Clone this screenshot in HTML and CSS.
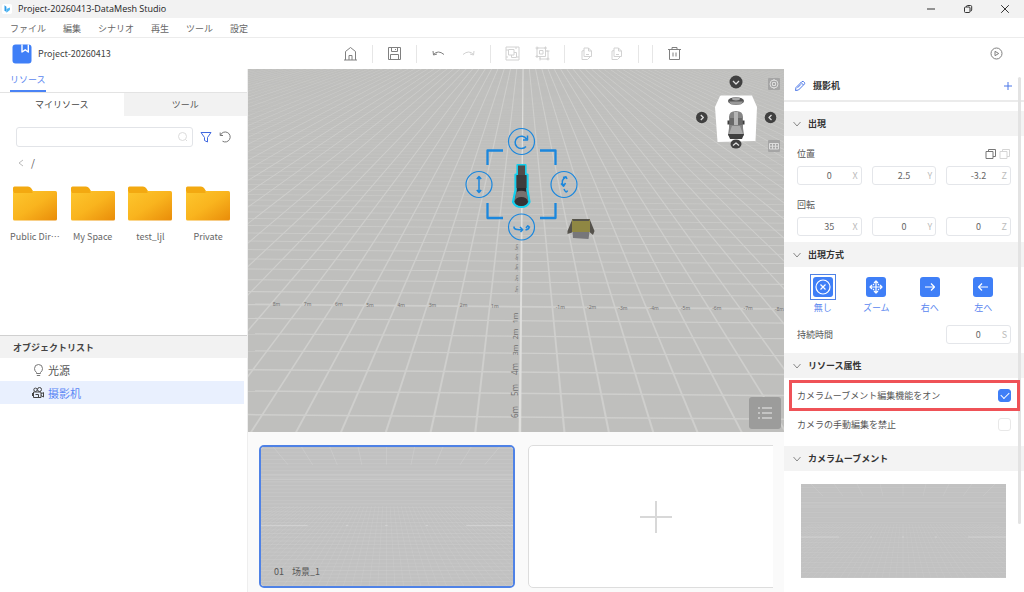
FILE: index.html
```html
<!DOCTYPE html>
<html lang="ja">
<head>
<meta charset="utf-8">
<title>Project-20260413-DataMesh Studio</title>
<link rel="stylesheet" href="styles.css">
</head>
<body>
<div class="app">
  <header class="titlebar">
    <svg class="app-logo" viewBox="0 0 12 12"><rect width="12" height="12" rx="2" fill="#fff"/><path d="M3 1.500L5.300 3.300V9.800L3 7.500Z" fill="#2f9be8"/><path d="M5.300 6L9.500 4.300V7.200L5.300 10.500Z" fill="#4db5f2"/></svg>
    <h1 class="window-title">Project-20260413-DataMesh Studio</h1>
    <div class="window-controls">
      <button class="win-btn" aria-label="最小化"><svg viewBox="0 0 10 10"><path d="M1 5H9"/></svg></button>
      <button class="win-btn" aria-label="元に戻す"><svg viewBox="0 0 10 10"><rect x="1.500" y="3" width="5.500" height="5.500" rx="1"/><path d="M3.500 3V2.500Q3.500 1.500 4.500 1.500H7.500Q8.700 1.500 8.700 2.700V6Q8.700 7 7.500 7"/></svg></button>
      <button class="win-btn" aria-label="閉じる"><svg viewBox="0 0 10 10"><path d="M1.200 1.200L8.800 8.800M8.800 1.200L1.200 8.800"/></svg></button>
    </div>
  </header>

  <nav class="menubar">
    <button>ファイル</button><button>編集</button><button>シナリオ</button><button>再生</button><button>ツール</button><button>設定</button>
  </nav>

  <div class="toolbar">
    <div class="project">
      <svg class="project-icon" viewBox="0 0 20 20"><rect x="0.500" y="0.500" width="19" height="19" rx="3" fill="#3f7ff7"/><path d="M10 0.500V8L13.200 5.800L16.300 8V0.500" fill="none" stroke="#fff" stroke-width="1.400"/></svg>
      <span>Project-20260413</span>
    </div>
    <div class="tools">
      <button class="tool" aria-label="ホーム"><svg viewBox="0 0 17 17"><path d="M2 15H15M3.500 15V6.500L8.500 2.500L13.500 6.500V15M7 15V10.500H10V15"/></svg></button>
      <i class="sep"></i>
      <button class="tool" aria-label="保存"><svg viewBox="0 0 17 17"><path d="M2.500 2.500H14.500V14.500H2.500ZM5.500 2.500V6.500H11.500V2.500M9.500 4V5M4.500 14.500V9.500H12.500V14.500"/></svg></button>
      <i class="sep"></i>
      <button class="tool" aria-label="元に戻す"><svg viewBox="0 0 17 17"><path d="M3 6L3.500 10L7 9M3.500 9.500Q8 4.500 14 9.500"/></svg></button>
      <button class="tool off" disabled aria-label="やり直し"><svg viewBox="0 0 17 17"><path d="M14 6L13.500 10L10 9M13.500 9.500Q9 4.500 3 9.500"/></svg></button>
      <i class="sep"></i>
      <button class="tool off" disabled aria-label="グループ化"><svg viewBox="0 0 17 17"><rect x="2" y="2" width="13" height="13"/><rect x="4.500" y="4.500" width="5.500" height="5.500"/><path d="M10 7.500H12.500V12.500H7.500V10"/><path d="M2 5H4M2 12H4M12 2V4M13 12H15"/></svg></button>
      <button class="tool off" disabled aria-label="グループ解除"><svg viewBox="0 0 17 17"><rect x="3" y="3" width="8.500" height="8.500"/><rect x="5.500" y="5.500" width="3.500" height="3.500"/><path d="M11.500 6H14V14H6V11.500M1.500 3H4.500M3 1.500V4.500M11.500 1.500V4.500M10 3H13M3 10V13M1.500 11.500H4.500M12.500 6H15.500M14 12.500V15.500M12.500 14H15.500M6 12.500V15.500"/></svg></button>
      <i class="sep"></i>
      <button class="tool off" disabled aria-label="コピー"><svg viewBox="0 0 17 17"><path d="M6 3H10.500L13.500 6V11.500H6ZM10.500 3V6H13.500M6 5.500L4 6V14.500H9.500L12 12M8 9.500H11"/></svg></button>
      <button class="tool off" disabled aria-label="貼り付け"><svg viewBox="0 0 17 17"><path d="M6 3H10.500L13.500 6V11.500H6ZM10.500 3V6H13.500M6 5.500L4 6V14.500H9.500L12 12M8 9.500H11"/></svg></button>
      <i class="sep"></i>
      <i class="sep"></i>
      <button class="tool" aria-label="削除"><svg viewBox="0 0 17 17"><path d="M2 4.500H15M6 4.500V2.500H11V4.500M3.500 4.500V14.500H13.500V4.500M7 7.500V11.500M10 7.500V11.500"/></svg></button>
    </div>
    <button class="tool play" aria-label="再生"><svg viewBox="0 0 17 17"><circle cx="8.500" cy="8.500" r="5.500"/><path d="M7 6.300V10.700L10.700 8.500Z"/></svg></button>
  </div>

  <main class="workspace">
    <aside class="left">
      <section class="resources">
        <div class="panel-tab"><button class="active">リソース</button></div>
        <div class="subtabs"><button class="active">マイリソース</button><button>ツール</button></div>
        <div class="search-row">
          <label class="search"><input type="text" aria-label="検索"><svg viewBox="0 0 12 12"><circle cx="5.500" cy="5.500" r="4"/><path d="M8.500 8.500L10 10"/></svg></label>
          <button class="mini blue" aria-label="フィルター"><svg viewBox="0 0 12 12"><path d="M1 1.500H11L7.500 6.500V11L4.500 9.500V6.500Z"/></svg></button>
          <button class="mini" aria-label="更新"><svg viewBox="0 0 12 12"><path d="M1.200 1.500V4.500H4M1.500 4.200A5 5 0 1 1 3.500 10.200"/></svg></button>
        </div>
        <div class="crumbs"><button aria-label="戻る"><svg viewBox="0 0 8 8"><path d="M6 1L2 4L6 7"/></svg></button><span>/</span></div>
        <svg class="defs" aria-hidden="true"><defs>
          <linearGradient id="gold" x1="0" y1="0" x2="1" y2="1"><stop offset="0" stop-color="#fdc62d"/><stop offset="0.500" stop-color="#f9b41e"/><stop offset="1" stop-color="#e98c09"/></linearGradient>
          <symbol id="folder" viewBox="0 0 44 35"><path d="M0 2Q0 0.500 1.500 0.500H15Q17 0.500 18 2L20 5V12H0Z" fill="#f3a911"/><rect x="0" y="5" width="44" height="29.500" rx="1.500" fill="url(#gold)"/><path d="M1 7V1.500H15L19.500 6V7Z" fill="#f3a911"/></symbol>
        </defs></svg>
        <div class="folders">
          <button><svg><use href="#folder"/></svg><span>Public Dir⋯</span></button>
          <button><svg><use href="#folder"/></svg><span>My Space</span></button>
          <button><svg><use href="#folder"/></svg><span>test_ljl</span></button>
          <button><svg><use href="#folder"/></svg><span>Private</span></button>
        </div>
      </section>
      <section class="objects">
        <h2>オブジェクトリスト</h2>
        <ul>
          <li><svg viewBox="0 0 12 14"><path d="M4.500 10.500V9.500Q2.500 8 2.500 5.500A4 4 0 0 1 10.500 5.500Q10.500 8 8.500 9.500V10.500ZM4.800 12.500H8.200"/></svg><span lang="zh-CN">光源</span></li>
          <li class="selected"><svg viewBox="0 0 12 14"><circle cx="3.500" cy="3.800" r="1.700"/><circle cx="7.500" cy="3.500" r="2"/><rect x="1.500" y="6" width="7.500" height="5.500"/><path d="M9 8L11.500 6.500V11L9 9.500M0.500 7V10M3.500 8.500H6.500V11.500"/></svg><span lang="zh-CN">摄影机</span></li>
        </ul>
      </section>
    </aside>

    <section class="center">
      <div class="viewport">
        <svg class="scene" viewBox="248 69 536 363" preserveAspectRatio="xMidYMid slice">
          <rect x="0" y="0" width="1024" height="592" fill="#bfbfbd"/>
          <g id="ground" transform="rotate(0.500 520 307)" fill="#cfcfcd" stroke="#cfcfcd"></g>
          <g id="axis-labels" class="axis-labels"></g>
          <g class="prop">
            <path d="M572 219H590V232H572Z" fill="#8f8743"/><path d="M572 219L590 219L589 221H573Z" fill="#55534b"/><path d="M572 220L567.500 231V234L572 232.500ZM590 220L594.500 231L593 235L590 232.500Z" fill="#55524c"/><path d="M572.500 232H589.500L588.500 239L573 238Z" fill="#77777a"/>
          </g>
          <g class="camera-model">
            <path d="M517.500 165H525.500V174.500H527.500V190L529.500 202Q527 207 521.300 207Q515.500 207 513 202L515.500 190V174.500H517.500Z" fill="#62605f" stroke="#12cfee" stroke-width="2.200" stroke-linejoin="round"/>
            <path d="M518 165.500H525V175H518Z" fill="#514c4b"/><path d="M516.500 175H526.500V188H516.500Z" fill="#3e3b3c"/><path d="M517 188H526V193H517Z" fill="#29292d"/><path d="M516.500 192Q521 189.500 526.500 192L528 201H515Z" fill="#77716f"/><ellipse cx="521.300" cy="201.500" rx="6.500" ry="4.500" fill="#343235"/>
          </g>
          <g class="gizmo">
            <path d="M487.500 165V150.500H503M540 150.500H555.500V165M487.500 203V218H503M540 218H555.500V203" stroke-width="2.300"/>
            <g stroke-width="1.200"><circle cx="521.500" cy="141.500" r="13"/><circle cx="479" cy="184.500" r="13"/><circle cx="564" cy="184.500" r="13"/><circle cx="521.500" cy="227" r="13"/></g>
            <g stroke-width="1.500"><path d="M526 146.500A6.200 6.200 0 1 1 526.500 139M527.500 135.500V140H523"/><path d="M479 177V192M476.800 179L479 176.500L481.200 179M476.800 190L479 192.500L481.200 190"/><path d="M566 177Q560 180 563.500 186M561 183.500L563.500 186.300L565.500 183M564 189Q566 194 567.500 190.500M563 177.500L566 176.800L567 179"/><path d="M514 226.500Q513.500 230.500 522.500 229.500M520 227L522.700 229.700L520.500 232M525.500 230Q531 228.500 528 226M526 228L527.800 225.800L530 227.500"/></g>
          </g>
        </svg>
        <svg class="viewcube" viewBox="0 0 82 76" role="img" aria-label="ビューキューブ">
          <path d="M24 27L25 26.500H56L61 38L59.500 72L21.500 73L19 38Z" transform="translate(0 0)" fill="#fff"/>
          <ellipse cx="40" cy="32" rx="8" ry="3.800" fill="#555"/><path d="M33 32.500H47L45 35.500H35Z" fill="#999"/><ellipse cx="40" cy="30" rx="4" ry="1.400" fill="#aaa"/>
          <path d="M33 48Q33 42 40 42Q47 42 47 48V59L48 66Q46 70 40 70Q34 70 32 66L33 59Z" fill="#858585"/><path d="M31.500 51.500H33.500V55.500H31.500ZM46.500 51.500H48.500V55.500H46.500Z" fill="#3d3d3d"/><path d="M34 49H46V56H34Z" fill="#696969"/><path d="M38 43H42V56H38Z" fill="#b5b5b5"/><path d="M36 57H44L47 65H33Z" fill="#aaa"/><path d="M32 65H48L46 70H34Z" fill="#3f3f3f"/>
          <g fill="#404040"><circle cx="40" cy="13" r="6.500"/><circle cx="5.800" cy="48.500" r="5.800"/><circle cx="74.500" cy="48.500" r="5.800"/></g>
          <path d="M37 12L40 15L43 12M4.800 46L7.300 48.500L4.800 51M75.500 46L73 48.500L75.500 51" fill="none" stroke="#ddd" stroke-width="1.300"/>
          <ellipse cx="40" cy="75" rx="5.500" ry="4.500" fill="#404040"/><path d="M37 76.500L40 74L43 76.500" fill="none" stroke="#ddd" stroke-width="1.300"/>
        </svg>
        <div class="view-tools">
          <button aria-label="フォーカス"><svg viewBox="0 0 12 12"><circle cx="6" cy="6" r="4"/><path d="M4.500 4.500H7.500V7.500H4.500ZM6 1V3M6 9V11"/></svg></button>
          <button aria-label="グリッド"><svg viewBox="0 0 12 12"><path d="M1.500 3.500H10.500V9H1.500ZM1.500 6.200H10.500M4.500 3.500V9M7.500 3.500V9"/></svg></button>
        </div>
        <button class="list-btn" aria-label="一覧"><svg viewBox="0 0 16 16"><path d="M5 3H15M5 8H15M5 13H15M1 3H3M1 8H3M1 13H3"/></svg></button>
      </div>
      <div class="strip">
        <div class="strip-scroll">
          <button class="scene-card active"><svg class="thumb" viewBox="0 0 205 94" preserveAspectRatio="none"></svg><span class="scene-name" lang="zh-CN"><span>01</span><span>场景_1</span></span></button>
          <button class="scene-card add" aria-label="シーンを追加"><svg viewBox="0 0 32 32"><path d="M16 0V32M0 16H32"/></svg></button>
        </div>
      </div>
    </section>

    <aside class="right">
      <div class="inspector-head">
        <svg viewBox="0 0 12 12"><path d="M1.500 10.500L2 7.500L8 1.500Q9.500 1 10.500 2.500Q11 3.500 10.300 4.200L4.500 10ZM7 2.500L9.500 5M3.500 7.800L7 4.300"/></svg>
        <h2 lang="zh-CN">摄影机</h2>
        <button aria-label="追加"><svg viewBox="0 0 12 12"><path d="M6 2V10M2 6H10"/></svg></button>
      </div>
      <h3 class="first"><svg viewBox="0 0 8 8"><path d="M0.500 2L4 6L7.500 2"/></svg>出現</h3>
      <div class="group">
        <div class="label-row"><span>位置</span><span class="copy-icons"><button aria-label="コピー"><svg viewBox="0 0 12 12"><path d="M1 3.500H8V10.500H1ZM3.500 3.500V1.500H10.500V8.500H8"/></svg></button><button class="off" disabled aria-label="貼り付け"><svg viewBox="0 0 12 12"><path d="M1 3.500H8V10.500H1ZM3.500 3.500V1.500H10.500V8.500H8"/></svg></button></span></div>
        <div class="fields">
          <label><input type="text" value="0"><span>X</span></label><label><input type="text" value="2.5"><span>Y</span></label><label><input type="text" value="-3.2"><span>Z</span></label>
        </div>
        <div class="label-row second"><span>回転</span></div>
        <div class="fields">
          <label><input type="text" value="35"><span>X</span></label><label><input type="text" value="0"><span>Y</span></label><label><input type="text" value="0"><span>Z</span></label>
        </div>
      </div>
      <h3><svg viewBox="0 0 8 8"><path d="M0.500 2L4 6L7.500 2"/></svg>出現方式</h3>
      <div class="modes">
        <button class="active"><span class="mode-icon"><svg viewBox="0 0 20 20"><circle cx="10" cy="10" r="7"/><path d="M7.500 7.500L12.500 12.500M12.500 7.500L7.500 12.500"/></svg></span>無し</button>
        <button><span class="mode-icon"><svg viewBox="0 0 20 20"><path d="M10 4V16M4 10H16M8 6L10 4L12 6M8 14L10 16L12 14M6 8L4 10L6 12M14 8L16 10L14 12M7 7L8 8M13 7L12 8M7 13L8 12M13 13L12 12"/></svg></span>ズーム</button>
        <button><span class="mode-icon"><svg viewBox="0 0 20 20"><path d="M5 10H14.500M11 6.500L14.500 10L11 13.500"/></svg></span>右へ</button>
        <button><span class="mode-icon"><svg viewBox="0 0 20 20"><path d="M15 10H5.500M9 6.500L5.500 10L9 13.500"/></svg></span>左へ</button>
      </div>
      <div class="duration"><span id="duration-label">持続時間</span><div class="fields"><label><input type="text" value="0" aria-labelledby="duration-label"><span>S</span></label></div></div>
      <h3><svg viewBox="0 0 8 8"><path d="M0.500 2L4 6L7.500 2"/></svg>リソース属性</h3>
      <label class="check-row highlight"><span>カメラムーブメント編集機能をオン</span><input type="checkbox" checked></label>
      <label class="check-row"><span>カメラの手動編集を禁止</span><input type="checkbox"></label>
      <h3><svg viewBox="0 0 8 8"><path d="M0.500 2L4 6L7.500 2"/></svg>カメラムーブメント</h3>
      <svg class="thumb preview" viewBox="0 0 205 94" preserveAspectRatio="none"></svg>
      <div class="scrollbar"></div>
    </aside>
  </main>
</div>
<script src="scene.js"></script>
</body>
</html>
```
FILE: styles.css
```css
* { box-sizing: border-box; }
body, h1, h2, h3, ul { margin: 0; padding: 0; }
body {
  font-family: "Noto Sans CJK JP", "Noto Sans CJK SC", sans-serif;
  font-size: 9px;
  line-height: 14px;
  color: #555;
  background: #fff;
}
[lang="zh-CN"] { font-family: "Noto Sans CJK SC", sans-serif; }
button { font: inherit; color: inherit; background: none; border: 0; padding: 0; margin: 0; }
input { font: inherit; color: inherit; margin: 0; }
svg { display: block; fill: none; stroke-linejoin: round; }
.defs { position: absolute; width: 0; height: 0; }
.app { height: 100vh; display: flex; flex-direction: column; overflow: hidden; }

.titlebar { height: 18px; flex: none; display: flex; align-items: center; gap: 6px; padding: 0 14px 0 2px; background: #f2f2f2; }
.app-logo { width: 10px; height: 12px; }
.window-title { font: 400 9px/14px "Open Sans", "Noto Sans", sans-serif; color: #222; }
.window-controls { margin-left: auto; display: flex; gap: 27px; }
.win-btn { width: 10px; height: 10px; stroke: #333; }

.menubar { height: 20px; flex: none; display: flex; align-items: center; gap: 17px; padding: 2px 10px 0; border-bottom: 1px solid #ececec; color: #666; }

.toolbar { height: 31px; flex: none; display: flex; align-items: center; padding-right: 19px; }
.project { width: 342px; flex: none; display: flex; align-items: center; gap: 6px; padding-left: 12px; color: #444; }
.project-icon { width: 20px; height: 20px; }
.tools { display: flex; align-items: center; gap: 13px; }
.tool { width: 17px; height: 17px; stroke: #808080; }
.tool.off { stroke: #d2d2d2; }
.sep { width: 1px; height: 18px; background: #e6e6e6; }
.play { margin-left: auto; }

.workspace { flex: 1; min-height: 0; display: grid; grid-template-columns: 248px 1fr 240px; }
.left { display: flex; flex-direction: column; min-height: 0; border-right: 1px solid #eee; }
.resources { flex: none; height: 266px; }
.panel-tab { height: 24px; padding-left: 10px; border-bottom: 1px solid #e3e3e3; }
.panel-tab button { height: 23px; border-bottom: 2px solid #4a83f5; color: #5b87f0; }
.subtabs { display: grid; grid-template-columns: 1fr 1fr; height: 23px; }
.subtabs button { background: #f2f2f2; }
.subtabs .active { background: #fff; color: #444; }
.search-row { display: flex; align-items: center; gap: 7px; padding: 11px 16px 0; }
.search { flex: 1; display: flex; align-items: center; height: 20px; padding-right: 3px; border: 1px solid #e2e4e8; border-radius: 3px; }
.search input { flex: 1; min-width: 0; border: 0; background: none; outline: 0; }
.search svg { width: 12px; height: 12px; stroke: #dcdcdc; }
.mini { width: 12px; height: 12px; stroke: #777; }
.mini.blue { stroke: #4068e0; }
.crumbs { display: flex; align-items: center; gap: 6px; padding: 9px 17px 0; font-size: 10px; }
.crumbs svg { width: 8px; height: 8px; stroke: #bbb; }
.folders { display: grid; grid-template-columns: repeat(4, 1fr); padding: 16px 10px 0 6px; color: #666; }
.folders button { display: flex; flex-direction: column; align-items: center; gap: 9px; white-space: nowrap; }
.folders svg { width: 44px; height: 35px; }
.objects { flex: 1; border-top: 1px solid #d0d0d0; }
.objects h2 { height: 22px; padding-left: 13px; background: #f2f2f2; font-size: 9px; line-height: 23px; font-weight: 700; color: #444; }
.objects ul { list-style: none; }
.objects li { height: 23px; display: flex; align-items: center; gap: 4px; padding-left: 32px; margin-right: 3px; font-size: 11px; }
.objects li svg { width: 12px; height: 14px; stroke: #777; }
.objects .selected { background: #e9f0fe; color: #5b87f5; }
.objects .selected svg { stroke: #444; }

.center { min-width: 0; min-height: 0; display: flex; flex-direction: column; background: #fafafa; }
.viewport { position: relative; flex: 1; min-height: 0; overflow: hidden; background: #bfbfbd; }
.scene { width: 100%; height: 100%; }
.axis-labels { font: 5px "Noto Sans", sans-serif; fill: #6f6f6f; text-anchor: middle; }
.axis-labels .near { font-size: 8px; }
.axis-labels .mid { font-size: 7px; }
.axis-labels .far { font-size: 4px; }
.gizmo { stroke: #1b87dd; }
.viewcube { position: absolute; top: 0; right: 6px; width: 82px; height: 76px; overflow: visible; }
.view-tools { position: absolute; top: 9px; right: 4px; display: grid; gap: 50px; }
.view-tools button { width: 12px; height: 12px; background: #a5a5a5; stroke: #ddd; border-radius: 1px; }
.list-btn { position: absolute; right: 3px; bottom: 3px; width: 32px; height: 32px; display: grid; place-items: center; border-radius: 3px; background: #9c9c9b; stroke: #ececec; }
.list-btn svg { width: 16px; height: 16px; }
.strip { flex: none; height: 160px; padding: 13px 11px 4px 11px; }
.strip-scroll { height: 100%; display: flex; gap: 13px; overflow: hidden; }
.scene-card { position: relative; flex: none; width: 256px; height: 143px; border-radius: 5px; overflow: hidden; }
.scene-card.active { border: 2px solid #4f82e6; }
.scene-card.add { display: grid; place-items: center; background: #fff; border: 1px solid #ddd; }
.scene-card.add svg { width: 32px; height: 32px; stroke: #d8d8d8; stroke-width: 2px; }
.thumb { width: 100%; height: 100%; background: #c1c1c1; stroke: #d2d2d2; stroke-width: 0.5px; }
.scene-name { position: absolute; left: 13px; bottom: 7px; display: flex; gap: 8px; }

.right { position: relative; min-height: 0; overflow: hidden; background: #fff; }
.inspector-head { height: 33px; display: flex; align-items: center; gap: 7px; padding: 2px 10px 0; border-bottom: 2px solid #ebebeb; }
.inspector-head svg { width: 12px; height: 12px; stroke: #4a76e8; }
.inspector-head h2 { flex: 1; font-size: 9px; line-height: 14px; color: #333; }
h3 { height: 25px; display: flex; align-items: center; gap: 7px; padding: 1px 0 0 9px; background: #f3f3f3; font-size: 9px; line-height: 14px; font-weight: 700; color: #333; }
h3.first { margin-top: 9px; }
h3 svg { width: 8px; height: 8px; stroke: #888; }
.group { padding: 11px 13px 6px; }
.label-row { display: flex; align-items: center; justify-content: space-between; height: 14px; margin-bottom: 5px; }
.label-row.second { margin-top: 13px; }
.copy-icons { display: flex; gap: 2px; }
.copy-icons button { width: 12px; height: 12px; stroke: #777; }
.copy-icons .off { stroke: #d5d5d5; }
.fields { display: grid; grid-template-columns: repeat(3, 1fr); gap: 10px; }
.fields label { display: flex; align-items: center; height: 19px; padding-right: 3px; border: 1px solid #e4e6ea; border-radius: 3px; color: #bbb; }
.fields input { flex: 1; min-width: 0; width: 0; padding: 0 0 0 8px; border: 0; background: none; outline: 0; text-align: center; color: #666; }
.modes { display: grid; grid-template-columns: repeat(4, 1fr); padding: 7px 14px 0 12px; color: #5b87f0; }
.modes button { display: flex; flex-direction: column; align-items: center; line-height: 14px; }
.mode-icon { padding: 2px; margin-bottom: 1px; border: 1px solid transparent; }
.active .mode-icon { border-color: #4f82e6; }
.mode-icon svg { width: 20px; height: 20px; border-radius: 3px; background: #3f7ff7; stroke: #fff; stroke-width: 1.2px; }
.duration { display: flex; align-items: center; justify-content: space-between; padding: 10px 13px 9px; }
.duration .fields { width: 65px; grid-template-columns: 1fr; }
.check-row { height: 25px; display: flex; align-items: center; justify-content: space-between; padding: 0 13px; margin-bottom: 9px; }
.check-row.highlight { position: relative; z-index: 1; height: 31px; margin: 2px 4px 1px 5px; padding: 0 6px 0 5px; border: 3px solid #ef5257; }
.check-row input { appearance: none; width: 13px; height: 13px; border: 1px solid #e8e8e8; border-radius: 3px; display: grid; place-items: center; }
.check-row input:checked { background: #3f7ff7; border-color: #3f7ff7; }
.check-row input:checked::after { content: ""; width: 7px; height: 4px; border: solid #fff; border-width: 0 0 1px 1px; transform: translateY(-1px) rotate(-45deg); }
.preview { width: 205px; height: 94px; margin: 13px 18px 0 17px; }
.scrollbar { position: absolute; top: 8px; right: 3px; width: 3px; height: 447px; border-radius: 2px; background: #e3e3e3; }
```
FILE: scene.js
```js
const NS = "http://www.w3.org/2000/svg";

function add(parent, tag, attrs, text) {
  const el = document.createElementNS(NS, tag);
  for (const key in attrs) el.setAttribute(key, attrs[key]);
  if (text) el.textContent = text;
  parent.appendChild(el);
}

// Ground plane: one grid cell per metre, seen from above with a far horizon.
const ground = document.getElementById("ground");
const horizon = 9.5;
const vanishX = 521;
for (let n = -95; n <= 8; n++) {
  const y = horizon + 6589 / (22.17 - n);
  const scale = (y - horizon) / 297;
  add(ground, "path", {
    d: `M200 ${y}H840`,
    "stroke-width": n === 0 ? 1.6 : Math.min(1.5, 1.2 * scale),
    opacity: n === 0 ? 1 : Math.min(1, scale * 1.1)
  });
}
for (let i = -50; i <= 50; i++) {
  const half = i === 0 ? 1.3 : 1.1;
  const x1 = vanishX + i * 31.3 * 0.2;
  const x2 = vanishX + i * 31.3 * 1.45;
  add(ground, "polygon", {
    points: `${x1 - half * 0.4},${horizon + 59.4} ${x1 + half * 0.4},${horizon + 59.4} ${x2 + half},440 ${x2 - half},440`,
    stroke: "none",
    fill: i === 0 ? "#dededc" : "#cfcfcd"
  });
}

// Distance marks on both axes.
const labels = document.getElementById("axis-labels");
for (let i = 1; i <= 8; i++) {
  add(labels, "text", { x: 526 - i * 31.2, y: 308 - i * 0.3 }, i + "m");
  add(labels, "text", { x: 529 + i * 31.3, y: 309 + i * 0.2 }, "-" + i + "m");
}
[318, 334, 350, 369, 390, 412].forEach((y, i) => {
  add(labels, "text", { transform: `translate(518 ${y}) rotate(-90)`, class: i < 3 ? "mid" : "near" }, (i + 1) + "m");
});
[290, 279, 268, 258, 248].forEach((y, i) => {
  add(labels, "text", { transform: `translate(518 ${y}) rotate(-90)`, class: "far" }, "-" + (i + 1) + "m");
});

// Scene thumbnails share one faint, distant grid.
document.querySelectorAll(".thumb").forEach(svg => {
  for (let y = 1; y < 94; y += 2.5) add(svg, "path", { d: `M0 ${y}H205`, opacity: 0.5 });
  for (let i = -30; i <= 30; i++) {
    add(svg, "path", { d: `M${102 + i * 3} 40L${102 + i * 7} 94`, opacity: 0.4 });
  }
  for (let i = -4; i <= 4; i++) {
    add(svg, "path", { d: `M${102 + i * 23} 0L${102 + i * 20} 12`, opacity: 0.7 });
  }
  add(svg, "path", { d: "M0 19H205M0 22H205", opacity: 0.8 });
  add(svg, "path", { d: "M0 53H38M167 53H205M69 53H71M101 53H103M134 53H136", stroke: "#dcdcdc" });
});
```
